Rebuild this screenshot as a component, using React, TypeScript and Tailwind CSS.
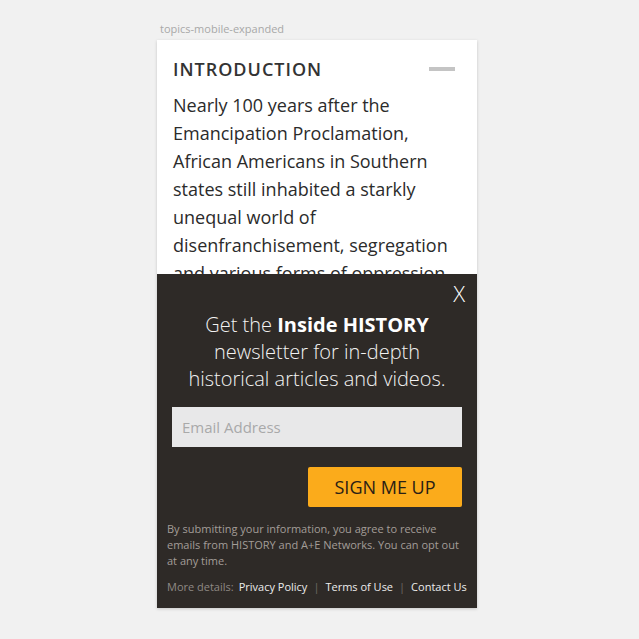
import React from "react";

export default function App() {
  return (
    <div
      className="w-[639px] h-[639px] bg-[#f1f1f1] flex flex-col items-start"
      style={{ fontFamily: '"Open Sans", "Noto Sans", sans-serif' }}
    >
      <div className="ml-[160px] mt-[21px] text-[11px] leading-[16px] text-[#a8a8a8]">
        topics-mobile-expanded
      </div>
      <div className="ml-[157px] mt-[3px] w-[320px] bg-white shadow-[0_1px_3px_rgba(0,0,0,0.18)] flex flex-col">
        <div className="h-[234px] overflow-hidden px-[16px] pt-[17px]">
          <div className="flex items-center justify-between">
            <h2 className="text-[18px] leading-[24px] font-semibold tracking-[0.055em] text-[#333]">
              INTRODUCTION
            </h2>
            <div className="w-[26px] h-[4px] bg-[#c4c4c4] mr-[6px]" />
          </div>
          <p className="mt-[10px] text-[18px] leading-[28px] text-[#2b2b2b]">
            Nearly 100 years after the Emancipation Proclamation, African Americans in Southern states still
            inhabited a starkly unequal world of disenfranchisement, segregation and various forms of
            oppression, including race-inspired violence.
          </p>
        </div>
        <div className="relative bg-[#2e2a27] flex flex-col pt-[37px] pb-[13px]">
          <button className="absolute right-[12px] top-[6px] text-white text-[22px] font-light leading-[26px]">
            X
          </button>
          <p className="text-center text-[20px] leading-[27px] font-light text-[#f2f2f2] px-[15px]">
            Get the <span className="font-bold text-white">Inside HISTORY</span>
            <br />
            newsletter for in-depth
            <br />
            historical articles and videos.
          </p>
          <div className="mx-[15px] mt-[15px] h-[40px] bg-[#e8e8e9] flex items-center px-[10px] text-[15px] text-[#a9a9a9]">
            Email Address
          </div>
          <div className="mx-[15px] mt-[20px] flex justify-end">
            <button className="w-[154px] h-[40px] bg-[#fbab1b] rounded-[2px] text-[18px] text-[#2a2015] flex items-center justify-center">
              SIGN ME UP
            </button>
          </div>
          <p className="mt-[14px] px-[10px] text-[11px] leading-[16px] text-[#a39d98]">
            By submitting your information, you agree to receive emails from HISTORY and A+E Networks. You can
            opt out at any time.
          </p>
          <div className="mt-[10px] px-[10px] text-[11px] leading-[16px] flex items-center whitespace-nowrap">
            <span className="text-[#8f8984]">More details:</span>
            <span className="ml-[5px] text-[#ececec]">Privacy Policy</span>
            <span className="mx-[6px] text-[#6f6a66]">|</span>
            <span className="text-[#ececec]">Terms of Use</span>
            <span className="mx-[6px] text-[#6f6a66]">|</span>
            <span className="text-[#ececec]">Contact Us</span>
          </div>
        </div>
      </div>
    </div>
  );
}
